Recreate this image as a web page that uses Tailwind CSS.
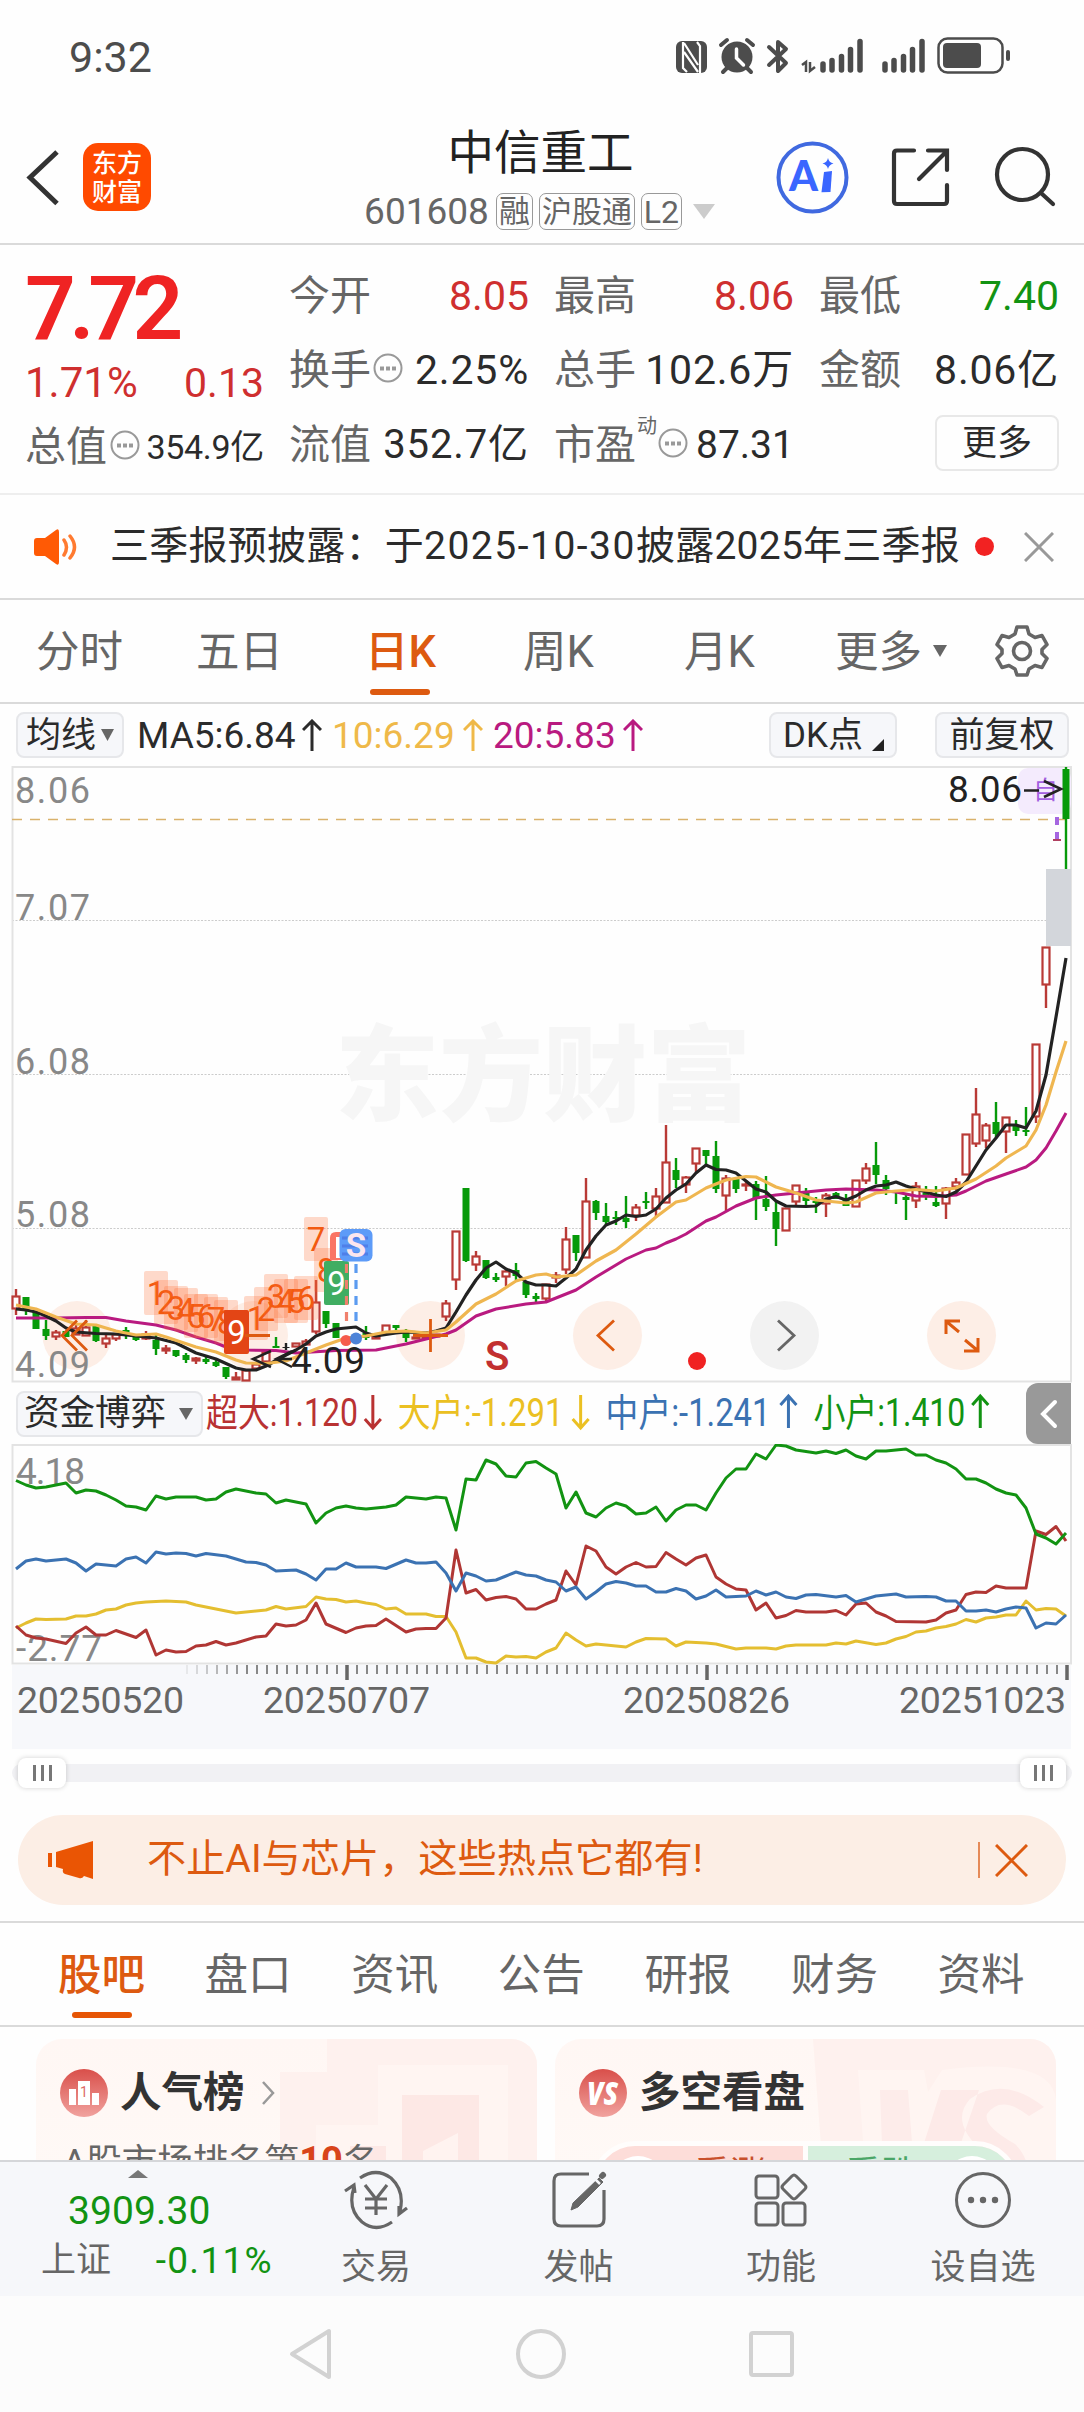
<!DOCTYPE html>
<html lang="zh-CN">
<head>
    <meta charset="UTF-8" />
    <meta name="viewport" content="width=device-width, initial-scale=1.0" />
    <title>中信重工 601608</title>
    <script src="https://cdn.jsdelivr.net/npm/@tailwindcss/browser@4"></script>
</head>
<body class="w-[1084px] h-[2412px] overflow-hidden bg-[#fefefe] font-['Roboto','Noto_Sans_CJK_SC',sans-serif] text-[#2b2b2b] leading-none whitespace-nowrap">

    <!-- Status bar -->
    <div class="h-[110px] flex justify-between pl-[69px] pr-[72px] pt-[34px]">
        <div class="text-[43px] leading-[46px] text-[#4c4c4c]">9:32</div>
        <svg class="w-[336px] h-[42px]" viewBox="676 34 336 42" fill="#4c4c4c">
            <rect x="676" y="41" width="31" height="32" rx="6" />
            <path d="M683 42v26l4 4M700 73V46l-3-4M684 43l14 22M684 52l14 20" stroke="#fefefe" stroke-width="2.2" fill="none" />
            <circle cx="737" cy="57" r="15.5" />
            <path d="M721 45l6-5M753 45l-6-5M727 68l-4 4M747 68l4 4" stroke="#4c4c4c" stroke-width="4" stroke-linecap="round" />
            <path d="M736.500 49v9l7 7" stroke="#fefefe" stroke-width="3.500" fill="none" stroke-linecap="round" />
            <path d="M769 47l17 16-8 8V42l8 7-17 16" stroke="#4c4c4c" stroke-width="4" fill="none" stroke-linecap="round" stroke-linejoin="round" />
            <path d="M802 65l4-3v10M810 62v9l5-4" stroke="#4c4c4c" stroke-width="2.500" fill="none" />
            <path d="M823 64v6M832 60.500v9.500M841.500 56.500v13.500M850.500 49.500v20.500M860 41.500v28.500M885 64v6M894 60.500v9.500M903.500 56.500v13.500M912.500 49.500v20.500M922 41.500v28.500" stroke="#4c4c4c" stroke-width="5.500" stroke-linecap="round" />
            <rect x="938.500" y="38.500" width="64" height="34" rx="9" fill="none" stroke="#4c4c4c" stroke-width="2.500" />
            <rect x="943" y="43" width="38" height="25" rx="4" />
            <rect x="1006" y="50" width="4" height="11" rx="2" />
        </svg>
    </div>

    <!-- Header -->
    <div class="h-[135px] border-b-2 border-[#dadada] flex justify-between pl-[26px] pr-[28px]">
        <div class="flex items-start pt-[33px] w-[300px]">
            <svg class="w-[34px] h-[68px]" viewBox="0 0 34 68" fill="none" stroke="#333" stroke-width="5"><path d="M31 9L4 34.500l27 26" /></svg>
            <div class="ml-[23px] w-[68px] h-[68px] rounded-[15px] bg-[#ff4a00] text-white font-medium text-[25px] leading-[29px] flex flex-col items-center justify-center pt-[2px]">
                <span>东方</span><span>财富</span>
            </div>
        </div>
        <div class="flex flex-col items-center pt-[20px] pr-[23px] w-[369px]">
            <div class="text-[46.500px] leading-[46px] text-[#222] ml-[2px]">中信重工</div>
            <div class="mt-[17px] flex items-center text-[#666]">
                <span class="text-[37px] mr-[7px]">601608</span>
                <span class="h-[37px] w-[37px] border-[1.500px] border-[#999] rounded-[7px] flex items-center justify-center text-[31px] mr-[6px]">融</span>
                <span class="h-[37px] w-[96px] border-[1.500px] border-[#999] rounded-[7px] flex items-center justify-center text-[30px] mr-[6px]">沪股通</span>
                <span class="h-[37px] w-[41px] border-[1.500px] border-[#999] rounded-[7px] flex items-center justify-center text-[32px] mr-[11px]">L2</span>
                <svg class="w-[22px] h-[15px]" viewBox="0 0 22 15"><path d="M0 0h22L11 15z" fill="#ccc" /></svg>
            </div>
        </div>
        <svg class="w-[280px] h-[76px] mt-[28px]" viewBox="776 138 280 76" fill="none" stroke="#333" stroke-width="4.200" stroke-linecap="round">
            <circle cx="812.500" cy="177.500" r="34" stroke="#4069e0" stroke-width="4" />
            <text x="789" y="190.500" font-family="Lato" font-weight="900" font-size="42" fill="#3a66ff" stroke="none" textLength="29" lengthAdjust="spacingAndGlyphs">A</text>
            <path d="M824 172l8-1-1.500 21-9 .3z" fill="#3a66ff" stroke="none" />
            <path d="M828 158q1 4.500 5.500 5.500-4.500 1-5.500 5.500-1-4.500-5.500-5.500 4.500-1 5.500-5.500z" fill="#3a66ff" stroke="none" />
            <path d="M914 150.500H897q-3 0-3 3V201q0 3 3 3h47q3 0 3-3V185M928 150.500h19V170M946 152l-27 27" />
            <circle cx="1022.500" cy="174.500" r="25.500" />
            <path d="M1041 193l12 11" />
        </svg>
    </div>

    <!-- Quote figures -->
    <div class="h-[250px] border-b-2 border-[#eee] pl-[25px] pt-[24px]">
        <div class="grid grid-cols-[239px_240px_240px_240px] gap-x-[25px] text-[41px]">
            <div class="flex flex-col">
                <div class="text-[#ef2323] font-semibold text-[89px] leading-[80px] h-[95px] tracking-[-6.500px]">7.72</div>
                <div class="h-[38px] leading-[38px] flex justify-between text-[#cf2f2f]"><span class="text-[42px]">1.71%</span><span>0.13</span></div>
                <div class="mt-[18px] h-[54px] flex items-center">
                    <span class="text-[#666]">总值</span>
                    <svg class="w-[30px] h-[30px] ml-[3px] mb-[5px]" viewBox="0 0 30 30"><circle cx="15" cy="15" r="13.500" fill="none" stroke="#999" stroke-width="2" /><path d="M7 13.500h4v4H7zM13 13.500h4v4h-4zM19 13.500h4v4h-4z" fill="#999" /></svg>
                    <span class="ml-auto text-[34px] tracking-[-0.300px]">354.9亿</span>
                </div>
            </div>
            <div class="flex flex-col">
                <div class="h-[54px] flex items-center justify-between"><span class="text-[#666]">今开</span><span class="text-[#cf2f2f]">8.05</span></div>
                <div class="mt-[20px] h-[54px] flex items-center"><span class="text-[#666]">换手</span>
                    <svg class="w-[30px] h-[30px] ml-[2px] mb-[5px]" viewBox="0 0 30 30"><circle cx="15" cy="15" r="13.500" fill="none" stroke="#999" stroke-width="2" /><path d="M7 13.500h4v4H7zM13 13.500h4v4h-4zM19 13.500h4v4h-4z" fill="#999" /></svg>
                    <span class="ml-auto tracking-[0.800px]">2.25%</span></div>
                <div class="mt-[21px] h-[54px] flex items-center justify-between"><span class="text-[#666]">流值</span><span class="text-[40px] tracking-[0.900px]">352.7亿</span></div>
            </div>
            <div class="flex flex-col">
                <div class="h-[54px] flex items-center justify-between"><span class="text-[#666]">最高</span><span class="text-[#cf2f2f]">8.06</span></div>
                <div class="mt-[20px] h-[54px] flex items-center justify-between"><span class="text-[#666]">总手</span><span class="text-[41px] tracking-[0.800px]">102.6万</span></div>
                <div class="mt-[21px] h-[54px] flex items-center"><span class="text-[#666]">市盈</span>
                    <span class="text-[20px] text-[#666] mb-[38px] ml-px">动</span>
                    <svg class="w-[30px] h-[30px] ml-px mb-[5px]" viewBox="0 0 30 30"><circle cx="15" cy="15" r="13.500" fill="none" stroke="#999" stroke-width="2" /><path d="M7 13.500h4v4H7zM13 13.500h4v4h-4zM19 13.500h4v4h-4z" fill="#999" /></svg>
                    <span class="ml-[8px] text-[39px]">87.31</span></div>
            </div>
            <div class="flex flex-col">
                <div class="h-[54px] flex items-center justify-between"><span class="text-[#666]">最低</span><span class="text-[#129312]">7.40</span></div>
                <div class="mt-[20px] h-[54px] flex items-center justify-between"><span class="text-[#666]">金额</span><span class="text-[41px] tracking-[0.800px]">8.06亿</span></div>
                <div class="mt-[18px] ml-auto w-[124px] h-[56px] border-2 border-[#e8e8e8] rounded-lg flex items-center justify-center text-[35px]">更多</div>
            </div>
        </div>
    </div>

    <!-- Notice -->
    <div class="h-[105px] border-b-2 border-[#dadada] flex items-center pl-[34px] pr-[30px]">
        <svg class="w-[46px] h-[36px]" viewBox="0 0 46 36"><path d="M0 12q0-3 3-3h8L22 1q3-2 3 2v30q0 4-3 2l-11-8H3q-3 0-3-3z" fill="#ff5a05" /><path d="M30 11q5 7 0 15M36 7q9 11 0 22" stroke="#ff7a30" stroke-width="3.500" fill="none" stroke-linecap="round" /></svg>
        <span class="ml-[30px] text-[39px] tracking-[0.250px] w-[862px]">三季报预披露：于<span class="tracking-[1.500px]">2025-10-30</span>披露2025年三季报</span>
        <span class="w-[19px] h-[19px] rounded-full bg-[#f22222] ml-[3px]"></span>
        <svg class="w-[30px] h-[30px] ml-auto" viewBox="0 0 30 30"><path d="M1 1l28 28M29 1L1 29" stroke="#999" stroke-width="3" /></svg>
    </div>

    <!-- Period tabs -->
    <div class="h-[104px] border-b-2 border-[#dadada] flex text-[43.500px] leading-[106px] text-[#666] pl-[36px]">
        <span class="w-[160px]">分时</span>
        <span class="w-[169px]">五日</span>
        <span class="w-[158px] h-[102px] text-[#dd5a10] font-medium relative">日K<i class="absolute left-[5px] bottom-[7px] w-[60px] h-[6px] rounded-full bg-[#dd5a10]"></i></span>
        <span class="w-[161px]">周K</span>
        <span class="w-[151px]">月K</span>
        <span class="w-[98px]">更多</span>
        <svg class="w-[14px] h-[12px] mt-[45px]" viewBox="0 0 14 12"><path d="M0 0h14L7 12z" fill="#666" /></svg>
        <svg class="w-[54px] h-[54px] mt-[24px] ml-[48px]" viewBox="0 0 54 54" fill="none" stroke="#666" stroke-width="3.600" stroke-linejoin="round"><path d="M22 3h10l2 7 6 3.500 7-2 5 9-5 5v4l5 5-5 9-7-2-6 3.500-2 6H22l-2-6-6-3.500-7 2-5-9 5-5v-4l-5-5 5-9 7 2 6-3.500z" /><circle cx="27" cy="27" r="8.500" /></svg>
    </div>

    <!-- MA legend -->
    <div class="h-[62px] flex items-center pl-[16px] pr-[15px] text-[37px]">
        <div class="w-[108px] h-[46px] border-2 border-[#e6e7ea] bg-[#f6f7fa] rounded-lg flex items-center pl-[8px] text-[35px]">均线<svg class="w-[13px] h-[12px] ml-[5px]" viewBox="0 0 13 12"><path d="M0 0h13L6.500 12z" fill="#666" /></svg></div>
        <div class="w-[196px] pl-[13px] flex items-center">MA5:6.84<svg class="w-[20px] h-[32px] ml-[6px] shrink-0" viewBox="0 0 20 32" fill="none" stroke="currentColor" stroke-width="3"><path d="M10 32V2M1 11l9-9 9 9" /></svg></div>
        <div class="w-[160px] pl-[12px] flex items-center text-[#efb949]">10:6.29<svg class="w-[20px] h-[32px] ml-[8px] shrink-0" viewBox="0 0 20 32" fill="none" stroke="currentColor" stroke-width="3"><path d="M10 32V2M1 11l9-9 9 9" /></svg></div>
        <div class="pl-[13px] flex items-center text-[#b91a80]">20:5.83<svg class="w-[20px] h-[32px] ml-[7px] shrink-0" viewBox="0 0 20 32" fill="none" stroke="currentColor" stroke-width="3"><path d="M10 32V2M1 11l9-9 9 9" /></svg></div>
        <div class="ml-auto w-[128px] h-[46px] border-2 border-[#e6e7ea] bg-[#f6f7fa] rounded-lg flex items-center pl-[12px] text-[35px]">DK点<svg class="w-[12px] h-[12px] ml-[9px] mt-[20px] shrink-0" viewBox="0 0 12 12"><path d="M12 0v12H0z" fill="#222" /></svg></div>
        <div class="ml-[38px] w-[134px] h-[46px] border-2 border-[#e6e7ea] bg-[#f6f7fa] rounded-lg flex items-center justify-center text-[35px]">前复权</div>
    </div>

    <!-- Candlestick chart -->
    <svg id="kline" class="block w-[1084px] h-[617px]" viewBox="0 766 1084 617" fill="none">
        <path d="M12 920.500H1071M12 1074.500H1071M12 1228.500H1071" stroke="#ccc" stroke-dasharray="2 1.500" />
        <text x="335" y="1113" font-size="104" font-weight="900" fill="#f6f6f6" textLength="416" lengthAdjust="spacingAndGlyphs">东方财富</text>
        <path d="M12.500 767V1381.500H1071V767z" stroke="#e3e3e3" stroke-width="2" />
        <path d="M12 819.500H1066" stroke="#d9b26c" stroke-width="1.500" stroke-dasharray="10 8" />
        <g fill="#fdeee6">
            <circle cx="77" cy="1335.500" r="34.500" />
            <circle cx="253.500" cy="1335.500" r="34.500" />
            <circle cx="430.500" cy="1335.500" r="34.500" />
            <circle cx="607.500" cy="1335.500" r="34.500" />
            <circle cx="784.500" cy="1335.500" r="34.500" fill="#f2f2f2" />
            <circle cx="961.500" cy="1335.500" r="34.500" />
        </g>
        <g font-size="36" fill="#888">
            <text x="15" y="803" textLength="75">8.06</text>
            <text x="15" y="920" textLength="75">7.07</text>
            <text x="15" y="1074" textLength="75">6.08</text>
            <text x="15" y="1227" textLength="75">5.08</text>
            <text x="15" y="1377" textLength="75">4.09</text>
        </g>
        <rect x="1018" y="768" width="53" height="46" rx="10" fill="#f4ebfd" />
        <rect x="1046" y="869" width="25" height="77" fill="#d3d6db" />
        <g id="candles"></g>
        <g id="ma"></g>
        <g id="marks" font-size="33" text-anchor="middle"></g>
        <g stroke="#dd5a10" stroke-width="2.800">
            <path d="M77 1320.500l-15 15 15 15M87 1320.500l-15 15 15 15M245 1335.500h25M413 1335.500h35M430.500 1319v33M614 1320.500l-16 15 16 15" />
            <path d="M946 1334v-13h14M947 1322l12 10M964 1351h14v-13M977 1350l-12-10" stroke-width="3" />
        </g>
        <path d="M778 1320.500l16 15-16 15" stroke="#666" stroke-width="2.800" />

        <g stroke-width="3.200">
            <path d="M346.500 1264v62" stroke="#f0806c" stroke-dasharray="9 7" />
            <path d="M356 1264v60" stroke="#5b9bf0" stroke-dasharray="9 7" />
        </g>
        <path d="M336 1232h26v28h-32v-22q0-6 6-6z" fill="#fa7565" />
        <path d="M338 1237v21" stroke="#fff" stroke-width="4" />
        <rect x="339.500" y="1229" width="33" height="32.500" rx="6" fill="#5d9bf8" />
        <path d="M342 1238h26M342 1246h26M342 1254h26" stroke="#4f7fe8" stroke-width="3" />
        <text x="356" y="1257" font-size="33" font-weight="700" fill="#fbe6ee" text-anchor="middle">S</text>
        <circle cx="346" cy="1340.500" r="5.500" fill="#f65b4c" />
        <circle cx="356" cy="1338.500" r="6" fill="#4c83d8" />
        <path d="M271 1351l-18 8 18 8M292 1351l-16 8 16 8M276 1359h16" stroke="#222" stroke-width="2.500" />
        <text x="291" y="1373" font-size="37" fill="#222" textLength="74">4.09</text>
        <text x="485" y="1370" font-size="40" font-weight="600" fill="#c23030" textLength="24">S</text>
        <circle cx="697" cy="1361" r="9" fill="#f02222" />

        <text x="1033" y="799" font-size="25" fill="#a35fe0">自</text>
        <path d="M1057 817v23" stroke="#a566e0" stroke-width="4" stroke-dasharray="8 7" />
        <path d="M1053 840h8" stroke="#b04060" stroke-width="2" />
        <text x="948" y="802" font-size="37" fill="#222" textLength="74">8.06</text>
        <path d="M1024 790.500h15M1044 781l17 8-17 8" stroke="#222" stroke-width="2.600" />
    </svg>

    <!-- Money flow legend -->
    <div class="h-[61px] flex items-start pl-[16px] pr-[13px] text-[37px]">
        <div class="mt-[8px] w-[187px] h-[46px] border-2 border-[#e6e7ea] bg-[#f6f7fa] rounded-lg flex items-center pl-[6px] text-[35.500px]">资金博弈<svg class="w-[14px] h-[12px] ml-[13px]" viewBox="0 0 14 12"><path d="M0 0h14L7 12z" fill="#666" /></svg></div>
        <svg class="w-[824px] h-[61px]" viewBox="203 1383 824 61" fill="none" stroke-width="3" font-size="38">
            <g stroke="#b93232"><text x="206" y="1426" fill="#b93232" stroke="none" textLength="152" lengthAdjust="spacingAndGlyphs">超大:1.120</text><path d="M373 1395v32M365 1419l8 9 8-9" /></g>
            <g stroke="#ebc022"><text x="398" y="1426" fill="#ebc022" stroke="none" textLength="166" lengthAdjust="spacingAndGlyphs">大户:-1.291</text><path d="M581 1395v32M573 1419l8 9 8-9" /></g>
            <g stroke="#3b72b2"><text x="606" y="1426" fill="#3b72b2" stroke="none" textLength="165" lengthAdjust="spacingAndGlyphs">中户:-1.241</text><path d="M789 1428v-32M781 1405l8-9 8 9" /></g>
            <g stroke="#129312"><text x="814" y="1426" fill="#129312" stroke="none" textLength="152" lengthAdjust="spacingAndGlyphs">小户:1.410</text><path d="M981 1428v-32M973 1405l8-9 8 9" /></g>
        </svg>
        <div class="w-[45px] h-[61px] rounded-l-[12px] bg-[#999] flex items-center justify-center">
            <svg class="w-[18px] h-[30px]" viewBox="0 0 18 30" fill="none" stroke="#fff" stroke-width="4" stroke-linecap="round"><path d="M15 3L3 15l12 12" /></svg>
        </div>
    </div>

    <!-- Money flow chart -->
    <svg class="block w-[1084px] h-[306px]" viewBox="0 1444 1084 306" fill="none">
        <rect x="12" y="1665" width="1059" height="84" fill="#f7f8fb" />
        <path d="M12.500 1445H1071V1663.500H12.500z" stroke="#e3e3e3" stroke-width="2" />
        <g font-size="37" fill="#888">
            <text x="16" y="1484" textLength="69">4.18</text>
            <text x="16" y="1661" textLength="86">-2.77</text>
        </g>
        <g id="flow"></g>
        <g id="ticks"></g>
        <g font-size="37.500" fill="#666">
            <text x="17" y="1713" textLength="167">20250520</text>
            <text x="263" y="1713" textLength="167">20250707</text>
            <text x="623" y="1713" textLength="167">20250826</text>
            <text x="899" y="1713" textLength="167">20251023</text>
        </g>
    </svg>

    <!-- Range slider -->
    <div class="h-[65px] pt-[14px] px-[12px]">
        <div class="h-[18px] bg-[#f1f1f4] rounded-full flex items-center justify-between px-[6px]">
            <div class="w-[48px] h-[30px] bg-white rounded-lg shadow-[0_0_5px_rgba(0,0,0,0.18)] flex items-center justify-center gap-[5px]"><i class="w-[3px] h-[16px] bg-[#777]"></i><i class="w-[3px] h-[16px] bg-[#777]"></i><i class="w-[3px] h-[16px] bg-[#777]"></i></div>
            <div class="w-[46px] h-[30px] bg-white rounded-lg shadow-[0_0_5px_rgba(0,0,0,0.18)] flex items-center justify-center gap-[5px]"><i class="w-[3px] h-[16px] bg-[#777]"></i><i class="w-[3px] h-[16px] bg-[#777]"></i><i class="w-[3px] h-[16px] bg-[#777]"></i></div>
        </div>
    </div>

    <!-- Promo banner -->
    <div class="mx-[18px] h-[90px] rounded-full bg-[#fceee5] flex items-center pl-[30px] pr-[38px] text-[#dd5a10]">
        <svg class="w-[46px] h-[40px]" viewBox="0 0 46 40" fill="#ea5504"><path d="M0 13h4v14H0zM8 12L45 1v38l-9-3q-2 3-5 2l-14-4q-3-1-2-5l-7-2z" /></svg>
        <span class="ml-[53px] text-[39.200px]">不止AI与芯片，这些热点它都有!</span>
        <i class="ml-auto w-[2px] h-[36px] bg-[#e58a58]"></i>
        <svg class="ml-[15px] w-[33px] h-[33px]" viewBox="0 0 33 33"><path d="M1 1l31 31M32 1L1 32" stroke="#dd5a10" stroke-width="3" /></svg>
    </div>

    <!-- Content tabs -->
    <div class="mt-[16px] h-[106px] border-y-2 border-[#dadada] flex text-[43.500px] leading-[106px] text-[#666] pl-[58px]">
        <span class="w-[146.600px] h-[102px] text-[#dd5a10] font-medium relative">股吧<i class="absolute left-[14px] bottom-[7px] w-[60px] h-[6px] rounded-full bg-[#e65505]"></i></span>
        <span class="w-[146.600px]">盘口</span>
        <span class="w-[146.600px]">资讯</span>
        <span class="w-[146.600px]">公告</span>
        <span class="w-[146.600px]">研报</span>
        <span class="w-[146.600px]">财务</span>
        <span>资料</span>
    </div>

    <!-- Cards -->
    <div class="h-[133px] pt-[12px] pl-[36px] flex gap-[18px] overflow-hidden">
        <div class="relative w-[501px] h-[200px] rounded-[26px] overflow-hidden bg-linear-to-b from-[#fff7f4] to-[#fffaf7] pl-[24px]">
            <svg class="absolute right-0 top-0 w-[260px] h-[200px]" viewBox="277 0 260 200">
                <path d="M327 0h210v200H280V33h47z" fill="#fef1ee" /><path d="M378 26h130v174H316V86h62z" fill="#fff5f2" /><path d="M402 56h77v144h-77zM350 107h36v93h-36z" fill="#fde8e5" /><path d="M423 112l35-18v106h-18v-60l-17 10z" fill="#fff3f0" />
            </svg>
            <div class="relative pt-[30px] flex items-center">
                <svg class="w-[48px] h-[48px]" viewBox="0 0 48 48"><defs><linearGradient id="badge" x2="0" y2="1"><stop stop-color="#d94f4a" /><stop offset="1" stop-color="#f1a29e" /></linearGradient></defs><circle cx="24" cy="24" r="24" fill="url(#badge)" /><path d="M9 20h7v16H9zM18 12h12v24H18zM32 24h7v12h-7z" fill="#fff" /><text x="24" y="28" font-size="14" fill="#dd6a65" text-anchor="middle">1</text></svg>
                <span class="ml-[12px] text-[41.500px] font-bold text-[#333]">人气榜</span>
                <svg class="ml-[16px] w-[14px] h-[24px]" viewBox="0 0 14 24" fill="none" stroke="#999" stroke-width="2.500"><path d="M2 1l10 11L2 23" /></svg>
            </div>
            <div class="relative mt-[25px] ml-[3px] text-[35.500px] text-[#666]">A股市场排名第<b class="text-[38px] text-[#d8441a]">10</b>名</div>
        </div>
        <div class="relative w-[501px] h-[200px] rounded-[26px] overflow-hidden bg-linear-to-b from-[#fff7f4] to-[#fffaf7] pl-[24px]">
            <svg class="absolute right-0 top-0 w-[260px] h-[200px]" viewBox="796 2039 260 200">
                <path d="M813 2039h243v200H828z" fill="#fef1ee" />
                <path d="M858 2070h66l4 22 14-22q110-14 114 30v139H870z" fill="#fff5f2" />
                <path d="M880 2090h28l6 80-30 30z" fill="#fdecea" />
                <path d="M941 2090h38l-34 100h-36zM1044 2107q-40-32-74-8-20 22 10 50 18 18 10 45h35q10-30-10-50-32-18-28-30 14-20 42 2z" fill="#fdeae8" />
            </svg>
            <div class="relative pt-[30px] flex items-center">
                <svg class="w-[48px] h-[48px]" viewBox="0 0 48 48"><circle cx="24" cy="24" r="24" fill="url(#badge)" /><text x="8" y="36" font-family="Open Sans" font-size="32" font-weight="800" font-style="italic" fill="#fff" textLength="31" lengthAdjust="spacingAndGlyphs">VS</text></svg>
                <span class="ml-[12px] text-[41.500px] font-bold text-[#333]">多空看盘</span>
            </div>
            <div class="relative mt-[24px] ml-[12px] w-[428px] h-[88px] rounded-full border-[5px] border-[#fffdfc] flex overflow-hidden text-[36px]">
                <div class="w-1/2 bg-[#fdddd9] relative text-[#c8502c] leading-[58px] pl-[98px]">看涨<i class="absolute left-[14px] top-[10px] w-[56px] h-[56px] rounded-full bg-white"></i></div>
                <div class="w-[5px] bg-[#fffdfc]"></div>
                <div class="w-1/2 bg-[#d6efdd] relative text-[#4aa667] leading-[58px] pl-[37px]">看跌<i class="absolute right-[14px] top-[10px] w-[56px] h-[56px] rounded-full bg-white"></i></div>
            </div>
        </div>
    </div>

    <!-- Bottom toolbar -->
    <div class="h-[136px] border-t-2 border-[#d5d6d9] bg-[#f6f7fa] flex text-[35px] text-[#666]">
        <div class="w-[275px] flex flex-col text-[#129312]">
            <svg class="w-[20px] h-[8px] mt-[8px] ml-[128px]" viewBox="0 0 20 8"><path d="M0 8h20L10 0z" fill="#777" /></svg>
            <div class="mt-[14px] ml-[68px] text-[39px] tracking-[0.100px]">3909.30</div>
            <div class="mt-[11px] ml-[41px] flex items-center justify-between pr-[2px]"><span class="text-[#666]">上证</span><span class="text-[37px] tracking-[1.300px]">-0.11%</span></div>
        </div>
        <div class="w-[202px] flex flex-col items-center pt-[8px]">
            <svg class="w-[66px] h-[60px]" viewBox="0 0 66 60" fill="none" stroke="#666" stroke-width="3.200"><path d="M17 8Q33-3 48 8 62 21 57 41M49 52Q33 63 19 52 4 39 11 17M2 21l9-6 1 8M64 38l-8 6v-8" /><path d="M22 15l11 14 11-14M22 29h22M22 38h22M33 29v16" /></svg>
            <span class="mt-[20px]">交易</span>
        </div>
        <div class="w-[203px] flex flex-col items-center pt-[8px]">
            <svg class="w-[58px] h-[60px]" viewBox="0 0 58 60" fill="none" stroke="#666" stroke-width="3.200"><path d="M39 4H11q-7 0-7 7v38q0 7 7 7h36q7 0 7-7V20" /><path d="M21 40l2-7 26-25 4 4-25 25z" fill="#666" stroke-width="1" /><path d="M52 6l1-1" stroke-width="6" stroke-linecap="round" /><path d="M43 7l7 7" stroke="#f6f7fa" stroke-width="2.500" /></svg>
            <span class="mt-[20px]">发帖</span>
        </div>
        <div class="w-[202px] flex flex-col items-center pt-[8px]">
            <svg class="w-[56px] h-[60px]" viewBox="0 0 56 60" fill="none" stroke="#666" stroke-width="3"><rect x="3" y="6" width="22" height="22" rx="3" /><rect x="3" y="33" width="22" height="22" rx="3" /><rect x="30" y="33" width="22" height="22" rx="3" /><path d="M39 6q2-2 4 0l9 9q2 2 0 4l-9 9q-2 2-4 0l-9-9q-2-2 0-4z" /></svg>
            <span class="mt-[20px]">功能</span>
        </div>
        <div class="w-[202px] flex flex-col items-center pt-[8px]">
            <svg class="w-[60px] h-[60px]" viewBox="0 0 60 60"><circle cx="30" cy="30" r="26.500" fill="none" stroke="#666" stroke-width="3" /><g fill="#666"><circle cx="18" cy="30" r="3.200" /><circle cx="30" cy="30" r="3.200" /><circle cx="42" cy="30" r="3.200" /></g></svg>
            <span class="mt-[20px]">设自选</span>
        </div>
    </div>

    <!-- System navigation -->
    <div class="h-[116px] bg-[#fcfcfc] flex items-center justify-between pl-[288px] pr-[289px]">
        <svg class="w-[46px] h-[52px]" viewBox="0 0 46 52" fill="none" stroke="#d2d2d2" stroke-width="4" stroke-linejoin="round"><path d="M41 3v46L4 26z" /></svg>
        <svg class="w-[52px] h-[52px]" viewBox="0 0 52 52" fill="none" stroke="#d2d2d2" stroke-width="4"><circle cx="26" cy="26" r="23" /></svg>
        <svg class="w-[48px] h-[48px]" viewBox="0 0 48 48" fill="none" stroke="#d2d2d2" stroke-width="4"><rect x="4" y="3" width="41" height="42" rx="2" /></svg>
    </div>

    <script>
        const RED = "#b93a36";
        const GREEN = "#079a0a";
        const X = i => 16 + i * 10;

        function add(parent, tag, attrs, text) {
            const el = document.createElementNS("http://www.w3.org/2000/svg", tag);
            for (const k in attrs) el.setAttribute(k, attrs[k]);
            if (text !== undefined) el.textContent = text;
            document.getElementById(parent).appendChild(el);
        }

        // index, colour, body top, body bottom, wick top, wick bottom
        const candles = `0 r 1296 1309 1289 1315|1 g 1297 1310 1297 1315|2 g 1312 1329 1312 1329|3 g 1329 1336 1320 1340|4 r 1332 1337 1330 1340|5 g 1331 1337 1331 1337|6 r 1328 1335 1323 1335|7 r 1327 1336 1320 1336|8 g 1326 1341 1326 1342|9 r 1338 1344 1335 1348|10 r 1334 1339 1334 1341|11 g 1330 1333 1327 1339|12 g 1337 1340 1335 1341|13 r 1334 1339 1331 1340|14 g 1340 1349 1333 1355|15 r 1348 1351 1345 1354|16 g 1350 1356 1350 1357|17 g 1355 1360 1353 1363|18 r 1358 1361 1357 1364|19 g 1359 1362 1357 1364|20 g 1362 1366 1360 1367|21 g 1367 1377 1367 1379|22 r 1377 1380 1372 1380|23 r 1370 1381 1370 1381|24 r 1364 1369 1362 1370|25 r 1352 1362 1350 1362|26 g 1346 1348 1337 1348|27 k 1347 1348 1343 1350|28 r 1343 1347 1343 1347|29 r 1341 1345 1339 1345|30 r 1302 1332 1280 1334|31 g 1311 1324 1311 1328|32 g 1323 1338 1323 1338|35 g 1333 1338 1326 1340|36 r 1336 1339 1336 1339|37 r 1325 1334 1325 1334|38 g 1325 1328 1325 1330|39 g 1331 1338 1329 1342|40 r 1337 1339 1337 1339|41 r 1337 1339 1337 1339|42 r 1334 1337 1334 1337|43 r 1303 1317 1300 1321|44 r 1231 1280 1231 1290|45 g 1188 1261 1188 1262|46 r 1256 1265 1251 1271|47 g 1260 1278 1260 1279|48 g 1277 1280 1273 1282|49 r 1271 1277 1269 1286|50 g 1270 1276 1263 1280|51 g 1282 1295 1282 1298|52 g 1296 1299 1293 1302|53 r 1284 1299 1284 1303|54 r 1275 1278 1272 1283|55 r 1239 1270 1227 1274|56 g 1235 1253 1235 1261|57 r 1201 1258 1178 1258|58 g 1201 1213 1200 1220|59 g 1216 1222 1203 1225|60 g 1217 1219 1211 1225|61 g 1218 1222 1196 1228|62 r 1207 1216 1204 1221|63 g 1201 1203 1192 1209|64 r 1196 1209 1188 1218|65 r 1162 1203 1125 1203|66 g 1170 1180 1158 1188|67 r 1177 1185 1176 1193|68 r 1148 1164 1148 1173|69 g 1150 1156 1150 1164|70 g 1156 1189 1141 1193|71 r 1178 1196 1175 1211|72 g 1178 1189 1178 1193|73 r 1184 1186 1180 1191|74 g 1184 1199 1181 1220|75 g 1199 1207 1176 1211|76 g 1212 1229 1202 1246|77 r 1208 1231 1208 1231|78 r 1185 1202 1185 1206|79 g 1191 1201 1188 1205|80 g 1201 1203 1197 1213|81 r 1195 1204 1193 1217|82 g 1193 1199 1192 1199|83 g 1199 1206 1194 1206|84 r 1180 1207 1180 1207|85 r 1168 1181 1163 1184|86 g 1165 1175 1142 1184|87 g 1180 1189 1175 1195|88 g 1191 1193 1190 1204|89 g 1197 1200 1195 1220|90 r 1186 1201 1182 1208|91 g 1193 1196 1186 1200|92 g 1202 1206 1186 1207|93 r 1188 1204 1187 1219|94 r 1182 1187 1178 1190|95 r 1134 1175 1134 1175|96 r 1114 1144 1088 1147|97 r 1125 1141 1123 1148|98 g 1122 1134 1102 1138|99 r 1117 1132 1117 1153|100 g 1126 1131 1120 1136|101 g 1130 1132 1107 1136|102 r 1044 1117 1044 1123|103 r 947 985 947 1008|105 g 769 819 767 869`;
        candles.split("|").forEach(row => {
            const c = row.split(" ");
            const [top, bottom, hi, lo] = c.slice(2).map(Number);
            const x = X(Number(c[0]));
            const color = { r: RED, g: GREEN, k: "#222" }[c[1]];
            const solid = c[1] !== "r";
            add("candles", "path", { d: `M${x} ${hi}V${top}M${x} ${bottom}V${lo}`, stroke: color, "stroke-width": 2.4 });
            add("candles", "rect", {
                x: x - 3.5, y: solid ? top : top + 0.5, width: 7, height: Math.max(bottom - top - (solid ? 0 : 1), 1),
                fill: solid ? color : "#fff", stroke: solid ? "none" : color, "stroke-width": 2.2
            });
        });

        // "index y" pairs
        function line(parent, color, width, pts) {
            const points = pts.split(",").map(p => {
                const [i, y] = p.split(" ").map(Number);
                return `${X(i)},${y}`;
            }).join(" ");
            add(parent, "polyline", { points, stroke: color, "stroke-width": width, "stroke-linejoin": "round" });
        }

        line("ma", "#b91a80", 3, "0 1318,4 1318,7 1317.5,9 1317.5,11 1321,14 1325,16 1330,18 1337,20 1343,21 1347,23 1350,26 1350.5,28 1353,32 1350.5,36 1350,39 1344,41 1339,43 1334,44 1330,46 1316,48 1309,51 1304,53 1302,56 1290,58 1277,61 1259,63 1250,64 1248,65 1243,66 1239,67 1234,69 1221,70 1217,72 1206,74 1198,76 1195,78 1193,81 1190,83 1189,86 1190,88 1192,90 1196,92 1196.5,94 1195,95 1191,97 1181,99 1174,101 1167,102 1160,103 1148,104 1131,105 1113");
        line("ma", "#222", 3.2, "0 1309,1 1310,2 1312,3 1316,4 1321,5 1328,6 1332,8 1333.5,10 1334,13 1337,14 1338,16 1343,18 1353,20 1359,22 1368,23 1370,24 1370,25 1366,27 1355,28 1350,29 1344,30 1336,31 1332,32 1329,34 1327,35 1333,36 1336,38 1333,39 1332,41 1333,42 1331,43 1328,44 1312,45 1295,46 1280,47 1268,48 1262,49 1269,50 1273,51 1282,52 1285,53 1285,54 1286,55 1278,56 1269,57 1250,58 1236,59 1225,60 1221,61 1215,62 1216.5,63 1215,64 1209,65 1198,66 1190,67 1184,68 1173,69 1165,70 1169.5,71 1170,72 1173,73 1181,74 1189,75 1192,76 1201,77 1206,79 1206.5,80 1206,81 1199,82 1196.5,83 1200,84 1196,85 1190,86 1186,87 1185,88 1182,89 1186,90 1189,92 1195,93 1196.5,94 1192,95 1182,96 1166,97 1150,98 1138,99 1125,100 1125,101 1128,102 1111,103 1075,104 1017,105 958");
        line("ma", "#efb650", 3.2, "0 1305,2 1309,4 1317,6 1324,8 1325,10 1331,12 1335,14 1334,15 1337,18 1347,20 1352,22 1360,23 1363,25 1363.5,27 1361,29 1353,31 1345,33 1338,35 1336,37 1332,39 1331,41 1333,43 1330,44 1322,46 1304,48 1294,50 1281,52 1275,53 1274,54 1277,56 1275,58 1261,60 1250,62 1234,64 1217,66 1202,67 1200,69 1188,71 1180,73 1176.5,74 1177,76 1187,78 1193,80 1200,81 1201,83 1203,84 1202,86 1193,88 1191,90 1189.5,92 1191,94 1188,96 1179,98 1166,99 1158,100 1152,101 1146,102 1130,103 1105,104 1072,105 1041");

        // sequence counters: index, centre y, digit
        [[14, 1293, 1], [15, 1302, 2], [16, 1308, 3], [17, 1310, 4], [18, 1316, 5], [19, 1316, 6], [20, 1319, 7], [21, 1322, 8],
         [24, 1318, 1], [25, 1309, 2], [26, 1296, 3], [27, 1301, 4], [28, 1301, 5], [29, 1298, 6], [30, 1239, 7], [31, 1270, 8]].forEach(([i, y, n]) => {
            add("marks", "rect", { x: X(i) - 12, y: y - 22, width: 24, height: 44, rx: 2, fill: "#ff6a30", "fill-opacity": 0.25 });
            add("marks", "text", { x: X(i), y: y + 12, fill: "#f25a10" }, n);
        });
        [[22, 1332, "#e34515"], [32, 1283, "#40ad62"]].forEach(([i, y, c]) => {
            add("marks", "rect", { x: X(i) - 12, y: y - 22, width: 25, height: 44, rx: 2, fill: c });
            add("marks", "text", { x: X(i) + 0.5, y: y + 12, fill: "#fff" }, 9);
        });

        line("flow", "#e4be30", 3, "0 1628,1 1623,2 1619,3 1619.5,5 1619,6 1616,7 1616,8 1614,9 1610,10 1609,11 1605,12 1603,13 1602,15 1601,17 1602,18 1605,19 1607,21 1611,22 1613,24 1611,25 1610,26 1606.5,27 1609,29 1606.5,30 1597,31 1599,32 1599.5,33 1602,34 1601,35 1603,36 1604.5,37 1609,38 1608,39 1614,41 1614,42 1616.5,43 1616.5,44 1632,45 1658,46 1658,47 1662,48 1663,49 1656,50 1657,51 1656.5,52 1658,53 1652,54 1648,55 1633,56 1640,57 1646,58 1644,60 1646,61 1647,62 1642,63 1638.5,65 1639,66 1646,67 1642,69 1643,70 1644,72 1649,73 1648,75 1648,76 1649,77 1646,78 1645,81 1645,82 1643,83 1644,84 1641,86 1644.5,87 1643,88 1639,89 1636.5,90 1632,91 1631,92 1628,93 1626.5,94 1624,95 1619.5,96 1622,97 1618,98 1617,99 1615,100 1615,101 1601,102 1610,103 1608.5,104 1609,105 1616");
        line("flow", "#b03634", 3, "0 1626,1 1635,2 1638,3 1639,5 1643.5,6 1633,7 1627,8 1635,9 1635,10 1630.5,12 1637.5,13 1630,14 1655,15 1650,16 1652,17 1651.5,18 1646,19 1645,20 1641.5,21 1645,22 1643,24 1637,25 1636,26 1624,27 1626,28 1625,29 1620,30 1603,31 1624,33 1632.5,34 1628,35 1626,36 1625.5,37 1619,39 1632,40 1629,41 1628.5,42 1628.5,43 1618,44 1550,45 1593,46 1589.5,47 1600,48 1597.5,49 1596.5,50 1599,51 1609,52 1609,53 1604,54 1600,55 1571,56 1585,57 1546,58 1551,59 1567,60 1574,61 1567,62 1562.5,63 1567,64 1566.5,65 1552.5,66 1559,67 1565,68 1558,69 1555,70 1577,71 1584,72 1589,73 1590,74 1610,75 1603,76 1618,77 1615.5,78 1610.5,79 1612,81 1612,82 1610.5,83 1615,84 1604,85 1603,86 1612,87 1616,88 1621.5,91 1622,92 1620,93 1613,94 1610,95 1594.5,96 1592,97 1592.5,98 1586,99 1588,101 1588,102 1531,103 1534.5,104 1526.5,105 1541");
        line("flow", "#3b72b2", 3, "0 1569,1 1561,2 1559,3 1561,5 1559,6 1563,7 1571,8 1564,10 1566,11 1559,12 1557,13 1563,14 1552,15 1554,16 1553,17 1553.5,18 1556,19 1553.5,21 1556,23 1562,24 1562.5,25 1565,26 1571,28 1570,29 1574,30 1580,31 1569,32 1569,33 1563,34 1567,36 1567,37 1568.5,39 1560,40 1563,41 1563,42 1562,43 1573,44 1591,45 1573,46 1576,47 1581,48 1580,49 1576,50 1572,51 1575,52 1576,53 1580,54 1582,55 1591,56 1587,57 1599,58 1592,59 1584,60 1581.5,61 1583,62 1586,63 1586,64 1592,65 1592,66 1588.5,67 1591,68 1599,69 1596,70 1590,71 1597,73 1596,74 1591,75 1595,76 1592,77 1597,78 1598.5,79 1595,80 1594.5,82 1597,83 1595.5,84 1602,85 1599,86 1596,88 1594,89 1597,91 1596.5,92 1597,93 1601,94 1601,95 1611,96 1611,97 1610,98 1612,99 1609,100 1607,101 1608,102 1628,103 1623,104 1624,105 1615");
        line("flow", "#129312", 3, "0 1480.5,1 1485,2 1488,3 1487,5 1483,6 1493,7 1490,8 1491,9 1495,10 1500,11 1506,12 1507,13 1510,14 1496,15 1499,16 1497,18 1497,19 1500,20 1499,21 1492,22 1489,24 1493,25 1494,26 1503,27 1500,29 1504,30 1523,31 1513,32 1508,33 1506,34 1508,35 1509,37 1507,38 1505,39 1497,41 1499,42 1497,43 1498,44 1530,45 1479,46 1480,47 1460,48 1464,49 1476,50 1477,51 1463,52 1461.5,53 1468,54 1474,55 1508,56 1492,57 1513,58 1517,59 1508,60 1503,61 1506,62 1514,63 1513,64 1507,65 1521,66 1510,67 1505,68 1505,69 1510,70 1493,71 1478,72 1469,73 1469,74 1454,75 1459,76 1445,77 1446,78 1450,80 1453,81 1451,82 1453.5,83 1450,84 1456,85 1459,86 1451,87 1451,89 1449,90 1455,91 1455,92 1460,93 1463,94 1469,95 1479,96 1479,97 1483,98 1489,99 1493,100 1495,101 1508,102 1534,103 1538,104 1544,105 1533");

        for (let i = 17; i <= 105; i++) {
            const major = i === 33 || i === 69 || i === 105;
            add("ticks", "path", {
                d: `M${X(i) + 1} 1665V${major ? 1680 : 1674}`,
                stroke: major ? "#666" : "#888", "stroke-width": major ? 3.5 : 2, opacity: Math.min(1, (i - 16) / 7)
            });
        }
    </script>
</body>
</html>
